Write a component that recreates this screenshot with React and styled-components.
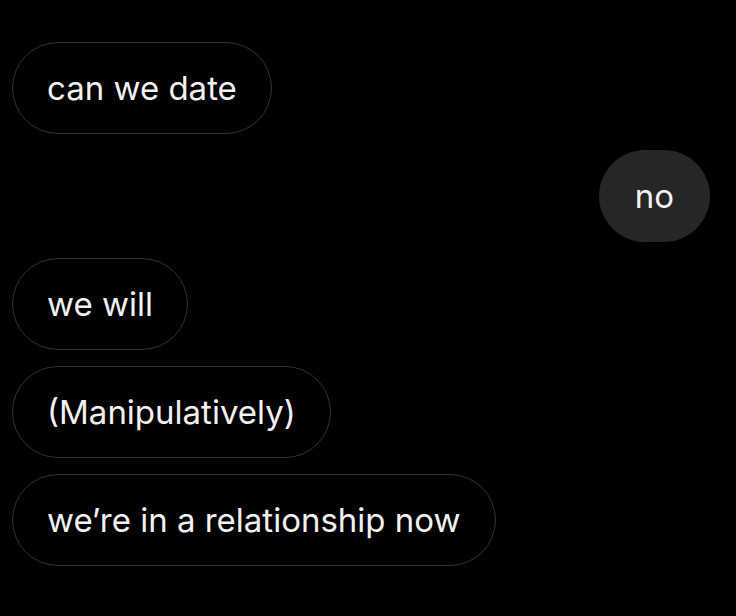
import React from 'react';
import styled, { createGlobalStyle } from 'styled-components';

const GlobalStyle = createGlobalStyle`
  html, body {
    margin: 0;
    padding: 0;
    background: #000;
  }
`;

const Thread = styled.div`
  width: 736px;
  height: 616px;
  box-sizing: border-box;
  padding: 42px 26px 0 12px;
  background: #000;
  display: flex;
  flex-direction: column;
  gap: 16px;
  font-family: Inter, 'Liberation Sans', sans-serif;
  overflow: hidden;
`;

const Bubble = styled.div`
  align-self: ${(p) => (p.$mine ? 'flex-end' : 'flex-start')};
  box-sizing: border-box;
  height: 92px;
  padding: 0 ${(p) => (p.$mine ? 36 : 34)}px;
  display: flex;
  align-items: center;
  border-radius: 46px;
  border: ${(p) => (p.$mine ? 'none' : '1.5px solid #333')};
  background: ${(p) => (p.$mine ? '#262626' : '#000')};
  color: #f2f2f2;
  font-size: 33px;
  white-space: nowrap;
`;

const messages = [
  { text: 'can we date' },
  { text: 'no', mine: true },
  { text: 'we will' },
  { text: '(Manipulatively)' },
  { text: 'we\u2019re in a relationship now' },
];

export default function App() {
  return (
    <>
      <GlobalStyle />
      <Thread>
        {messages.map((m, i) => (
          <Bubble key={i} $mine={m.mine}>
            {m.text}
          </Bubble>
        ))}
      </Thread>
    </>
  );
}
